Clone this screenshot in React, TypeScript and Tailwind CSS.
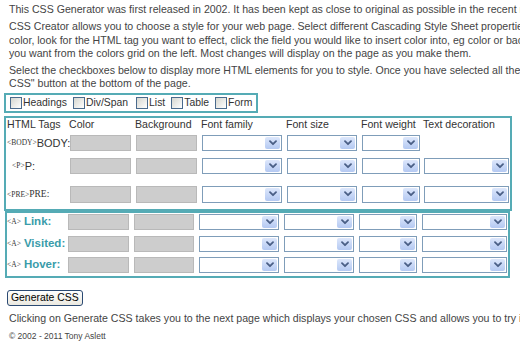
import React from 'react';

const sans = { fontFamily: '"Liberation Sans", Arial, sans-serif' };
const serif = { fontFamily: '"Liberation Serif", "Times New Roman", serif' };

const Chevron = () => (
    <svg width="8" height="6" viewBox="0 0 8 6" className="block">
        <path d="M1 1.2 L4 4.2 L7 1.2" fill="none" stroke="#4a5f86" strokeWidth="1.8" strokeLinecap="round" strokeLinejoin="round" />
    </svg>
);

const Select = ({ w }: { w: string }) => (
    <div className={`${w} h-full shrink-0 flex justify-end items-stretch border border-[#7f9db9] bg-white p-[1px]`}>
        <div className="w-[15px] flex items-center justify-center rounded-[2px] bg-gradient-to-b from-[#dde7fb] to-[#b4c9f2]">
            <Chevron />
        </div>
    </div>
);

const Swatch = ({ w }: { w: string }) => (
    <div className={`${w} h-full shrink-0 border border-[#b9b9b9] bg-[#cdcdcd]`} />
);

const Checkbox = ({ label, extra = '' }: { label: string; extra?: string }) => (
    <div className={`flex items-center ${extra}`}>
        <div className="w-[12px] h-[12px] border border-[#4a6a8c] bg-gradient-to-br from-[#d6d6cf] to-white" />
        <span className="ml-[1px] text-[10.4px] text-[#333]">{label}</span>
    </div>
);

const SmallTag = ({ t }: { t: string }) => (
    <span style={serif} className="text-[7.5px] text-[#333]">{t}</span>
);

interface Row {
    label: React.ReactNode;
    deco: boolean;
    mt: string;
    h: string;
}

const mainRows: Row[] = [
    { label: <><SmallTag t="<BODY>" /><span className="text-[11px] text-[#333]">BODY:</span></>, deco: false, mt: 'mt-[2px]', h: 'h-[16px]' },
    { label: <><span className="w-[5px]" /><SmallTag t="<P>" /><span className="text-[11px] text-[#333]">P:</span></>, deco: true, mt: 'mt-[7px]', h: 'h-[16px]' },
    { label: <><SmallTag t="<PRE>" /><span style={serif} className="text-[9.5px] text-[#333]">PRE:</span></>, deco: true, mt: 'mt-[12px]', h: 'h-[17px]' },
];

const linkRows = [
    { name: 'Link:', mt: 'mt-[1px]' },
    { name: 'Visited:', mt: 'mt-[6px]' },
    { name: 'Hover:', mt: 'mt-[5px]' },
];

export default function App() {
    return (
        <div style={sans} className="w-[520px] h-[347px] overflow-hidden bg-white text-[#444]">
            <div className="pl-[9px] pt-[3px] text-[10.6px] leading-[13.3px] whitespace-nowrap">
                <p>This CSS Generator was first released in 2002. It has been kept as close to original as possible in the recent redesign.</p>
                <p className="mt-[4px]">
                    CSS Creator allows you to choose a style for your web page. Select different Cascading Style Sheet properties for each tag.<br />
                    color, look for the HTML tag you want to effect, click the field you would like to insert color into, eg color or background, then the<br />
                    you want from the colors grid on the left. Most changes will display on the page as you make them.
                </p>
                <p className="mt-[4px]">
                    Select the checkboxes below to display more HTML elements for you to style. Once you have selected all the elements, click the "Generate<br />
                    CSS" button at the bottom of the page.
                </p>
            </div>

            {/* Element checkboxes */}
            <div className="ml-[4px] mt-[2px] inline-flex items-center gap-[6px] h-[20px] border-2 border-[#55abb5] pl-[4px] pr-[4px]">
                <Checkbox label="Headings" />
                <Checkbox label="Div/Span" />
                <Checkbox label="List" extra="ml-[2px]" />
                <Checkbox label="Table" />
                <Checkbox label="Form" />
            </div>

            {/* Main tags table */}
            <div className="ml-[4px] w-[508px] border-2 border-[#55abb5] pl-[1px] pb-[6px] text-[10.6px] text-[#333]">
                <div className="flex items-center h-[15px] gap-[5px]">
                    <span className="w-[63px] -mr-[6px]">HTML Tags</span>
                    <span className="w-[61px]">Color</span>
                    <span className="w-[61px]">Background</span>
                    <span className="w-[80px]">Font family</span>
                    <span className="w-[70px]">Font size</span>
                    <span className="w-[58px] -mr-[1px]">Font weight</span>
                    <span className="w-[85px]">Text decoration</span>
                </div>
                {mainRows.map((r, i) => (
                    <div key={i} className={`flex items-center ${r.mt} ${r.h}`}>
                        <div className="w-[63px] flex items-center">{r.label}</div>
                        <div className="flex gap-[5px] h-full">
                            <Swatch w="w-[61px]" />
                            <Swatch w="w-[61px]" />
                            <Select w="w-[80px]" />
                            <Select w="w-[70px]" />
                            <Select w="w-[58px]" />
                        </div>
                        {r.deco && <div className="ml-[4px] h-full flex"><Select w="w-[85px]" /></div>}
                    </div>
                ))}
            </div>

            {/* Link states */}
            <div className="ml-[5px] w-[505px] border-2 border-[#55abb5] pb-[3px]">
                {linkRows.map(r => (
                    <div key={r.name} className={`flex items-center h-[16px] ${r.mt}`}>
                        <div className="w-[61px] flex items-center gap-[3px]">
                            <SmallTag t="<A>" />
                            <span className="text-[11.5px] font-bold text-[#3a9caa]">{r.name}</span>
                        </div>
                        <div className="flex gap-[5px] h-full">
                            <Swatch w="w-[61px]" />
                            <Swatch w="w-[60px]" />
                            <Select w="w-[80px]" />
                            <Select w="w-[70px]" />
                            <Select w="w-[58px]" />
                            <Select w="w-[85px]" />
                        </div>
                    </div>
                ))}
            </div>

            <div className="pl-[7px] mt-[12px]">
                <button className="h-[16px] px-[3px] flex items-center rounded-[3px] border border-[#2b4a73] bg-gradient-to-b from-white to-[#ebe9e0] text-[10.4px] text-black leading-none">
                    Generate CSS
                </button>
            </div>

            <p className="pl-[9px] mt-[6px] text-[10.6px] leading-[13.3px] whitespace-nowrap">
                Clicking on Generate CSS takes you to the next page which displays your chosen CSS and allows you to try it out on a sample page.
            </p>
            <p className="pl-[9px] mt-[6px] text-[8.5px] leading-[11px] text-[#444]">© 2002 - 2011 Tony Aslett</p>
        </div>
    );
}
